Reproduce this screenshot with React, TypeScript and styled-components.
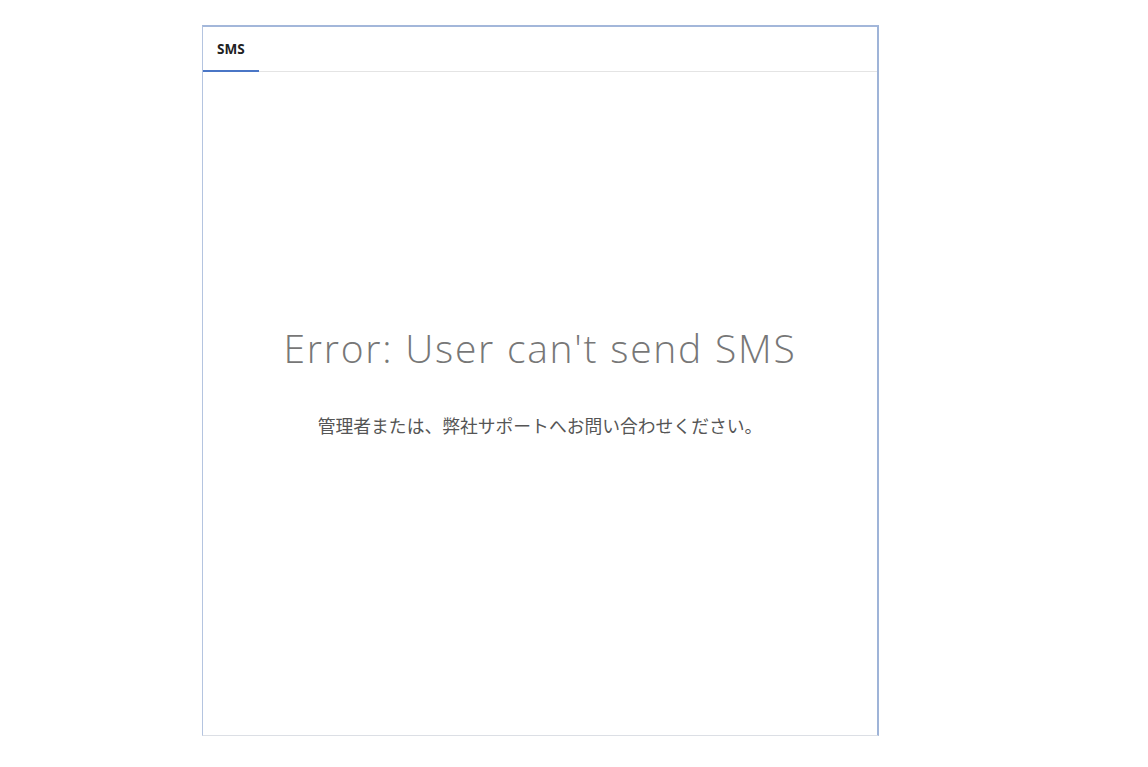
import * as React from 'react';
import styled, { createGlobalStyle } from 'styled-components';

const GlobalStyle = createGlobalStyle`
  html, body {
    margin: 0;
    padding: 0;
    background: #ffffff;
  }
  body {
    font-family: 'Open Sans', 'Noto Sans CJK JP', sans-serif;
  }
`;

const Page = styled.div`
  display: flex;
  padding: 25px 0 0 202px;
`;

const Panel = styled.section`
  width: 674px;
  height: 708px;
  display: flex;
  flex-direction: column;
  background: #ffffff;
  border-top: 2px solid #a3b7da;
  border-left: 1px solid #b4c4e0;
  border-right: 2px solid #9fb4d8;
  border-bottom: 1px solid #dcdfe5;
`;

const TabBar = styled.div`
  display: flex;
  height: 44px;
  border-bottom: 1px solid #e4e4e4;
`;

const Tab = styled.div<{ $active?: boolean }>`
  display: flex;
  align-items: center;
  padding: 0 14px;
  margin-bottom: -1px;
  font-family: 'Open Sans', 'Noto Sans CJK JP', sans-serif;
  font-weight: 700;
  font-size: 13.5px;
  color: #222;
  border-bottom: 2px solid ${(p) => (p.$active ? '#4a76c6' : 'transparent')};
`;

const Body = styled.div`
  flex: 1;
  display: flex;
  flex-direction: column;
  align-items: center;
  padding-top: 253px;
`;

const Title = styled.h1`
  margin: 0;
  font-family: 'Open Sans', Lato, sans-serif;
  font-weight: 300;
  font-size: 39px;
  letter-spacing: 1.75px;
  line-height: 46px;
  color: #777777;
`;

const Message = styled.p`
  margin: 42px 0 0;
  font-family: 'Noto Sans CJK JP', sans-serif;
  font-size: 17.8px;
  line-height: 24px;
  color: #555555;
`;

const App: React.FC = () => {
  return (
    <Page>
      <GlobalStyle />
      <Panel>
        <TabBar>
          <Tab $active>SMS</Tab>
        </TabBar>
        <Body>
          <Title>Error: User can't send SMS</Title>
          <Message>管理者または、弊社サポートへお問い合わせください。</Message>
        </Body>
      </Panel>
    </Page>
  );
};

export default App;
